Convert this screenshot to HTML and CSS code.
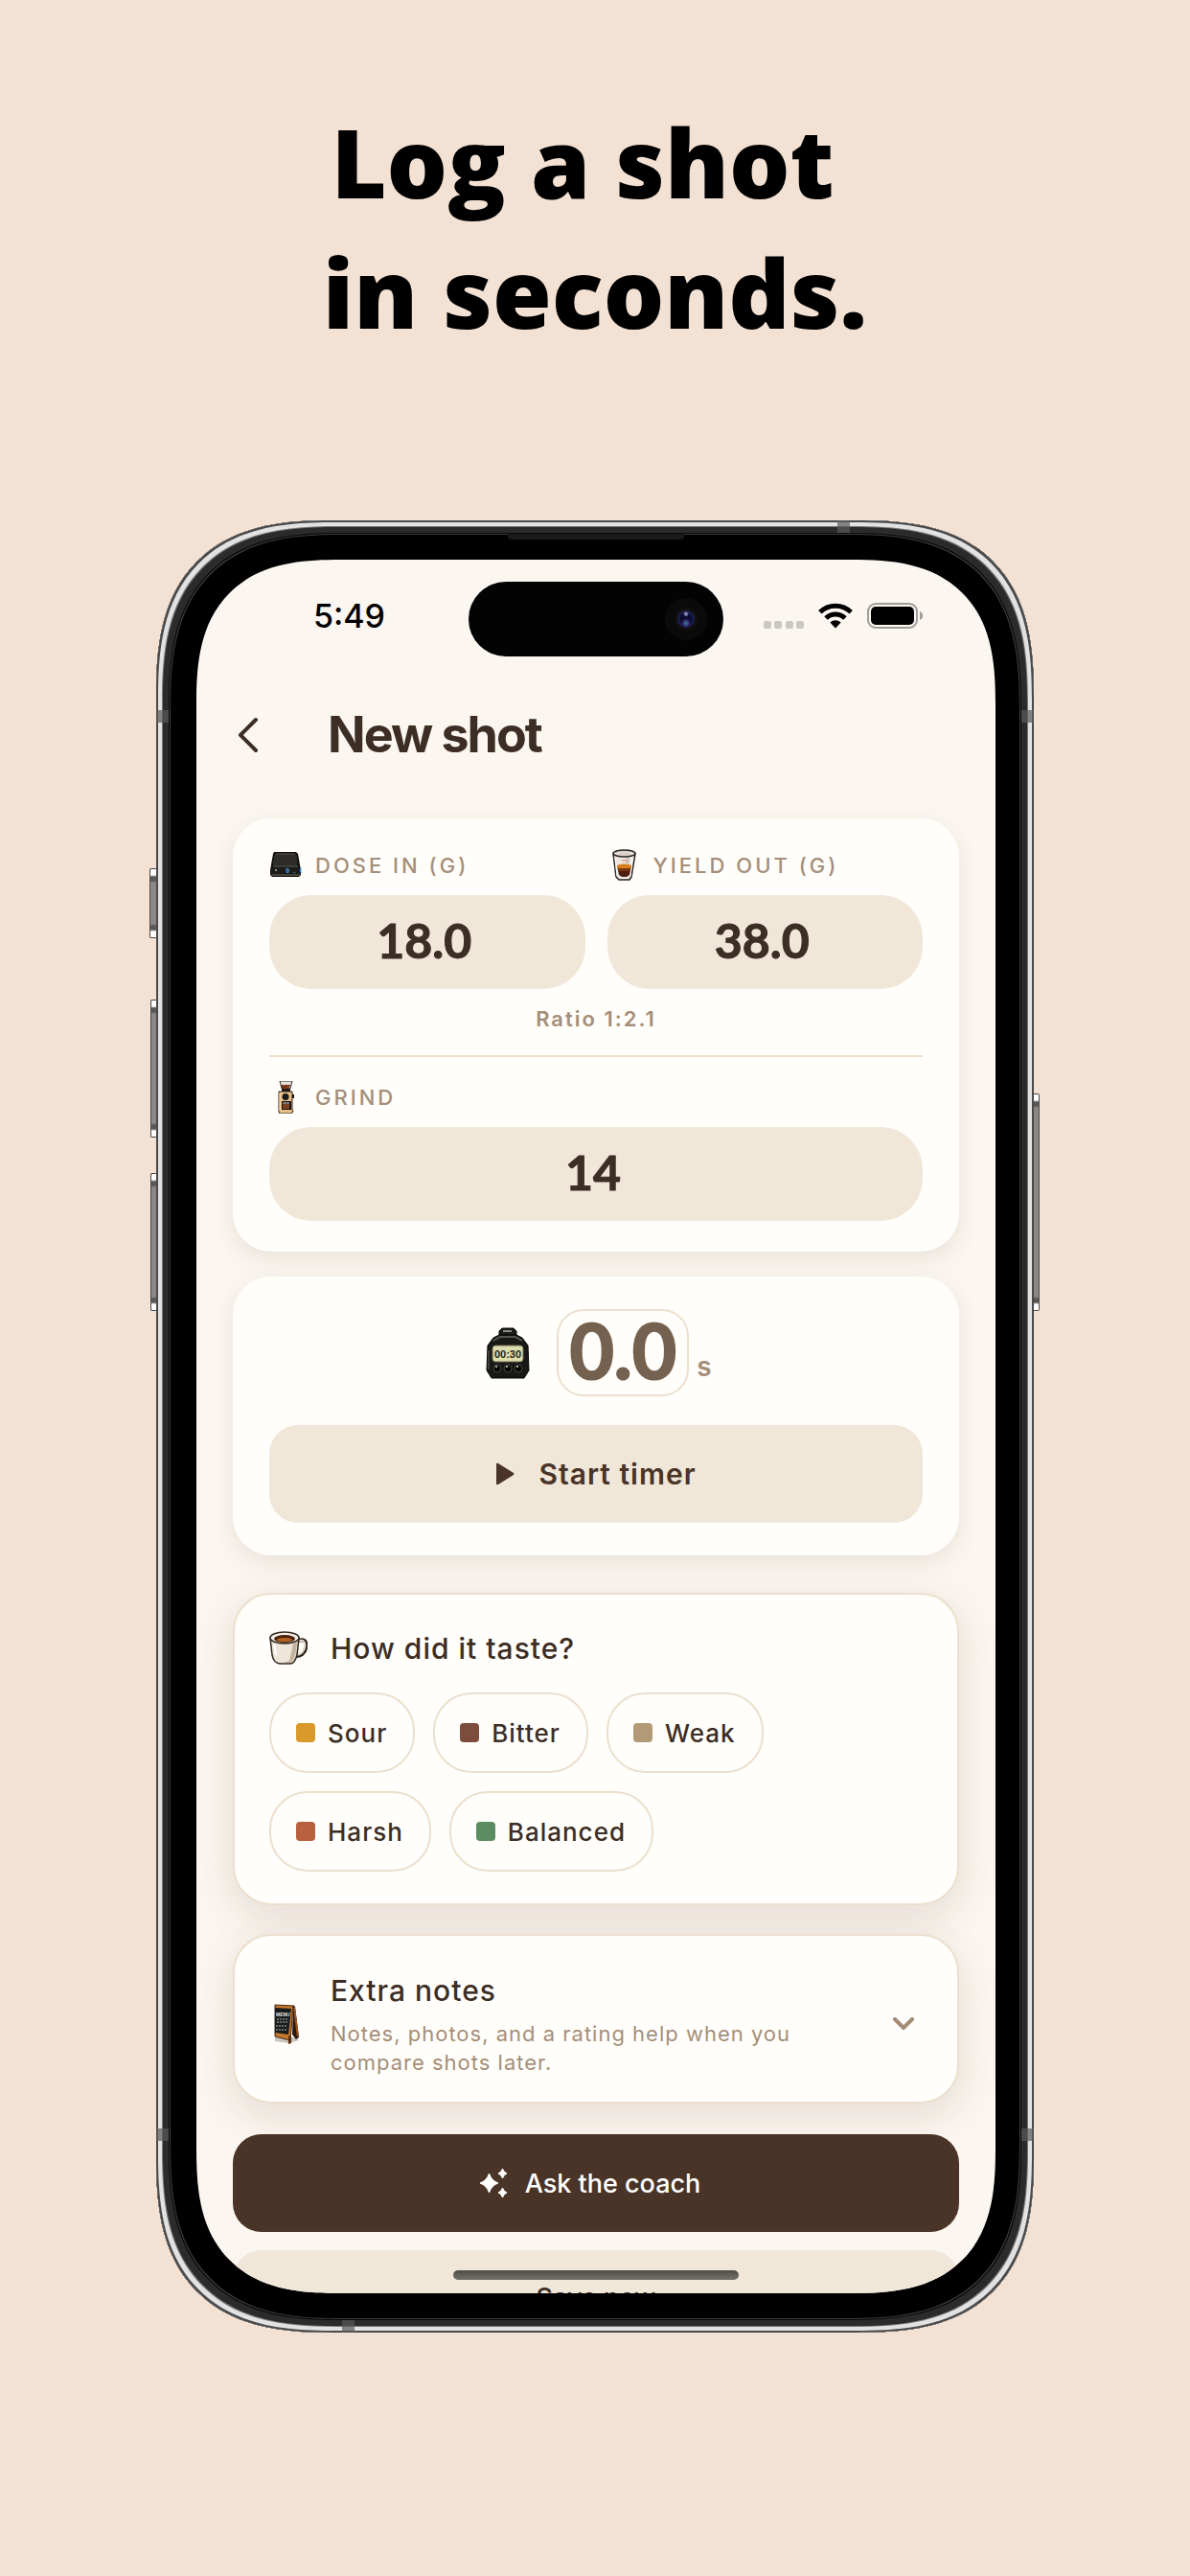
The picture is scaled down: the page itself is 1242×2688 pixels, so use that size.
FILE: index.html
```html
<!DOCTYPE html>
<html lang="en">
<head>
  <meta charset="UTF-8" />
  <meta name="viewport" content="width=device-width, initial-scale=1.0"/>
  <title>New shot</title>
  <link rel="stylesheet" href="styles.css">
</head>
<body>
  <h1 class="headline">Log a shot 
in seconds.</h1>

  <div class="phone">
    <!-- side buttons and antenna bands -->
    <span class="side-button action"></span>
    <span class="side-button volume-up"></span>
    <span class="side-button volume-down"></span>
    <span class="side-button power"></span>
    <span class="band band-left band-high"></span>
    <span class="band band-left band-low"></span>
    <span class="band band-right band-high"></span>
    <span class="band band-right band-low"></span>
    <span class="band band-top"></span>
    <span class="band band-bottom"></span>
    <span class="speaker"></span>

    <div class="screen">
      <div class="status">
        <span class="time">5:49</span>
        <div class="island"><span class="camera"></span></div>
        <div class="status-icons">
          <svg width="42" height="27" viewBox="0 0 42 27">
            <g fill="#cbc7c1">
              <rect x="0" y="19" width="8" height="8" rx="2"/>
              <rect x="11" y="19" width="8" height="8" rx="2"/>
              <rect x="23" y="19" width="8" height="8" rx="2"/>
              <rect x="34" y="19" width="8" height="8" rx="2"/>
            </g>
          </svg>
          <svg width="36" height="27" viewBox="0 0 36 27">
            <g fill="none" stroke="#000" stroke-width="5">
              <path d="M1.8 9.8a23 23 0 0 1 32.4 0"/>
              <path d="M8 16a14.2 14.2 0 0 1 20 0"/>
            </g>
            <path d="M12.3 20.6a8.2 8.2 0 0 1 11.4 0L18 26.4z"/>
          </svg>
          <svg width="59" height="27" viewBox="0 0 59 27">
            <rect x="1" y="1" width="51" height="25" rx="8" fill="none" stroke="#a09c98" stroke-width="2"/>
            <rect x="4" y="4" width="45" height="19" rx="5"/>
            <path d="M55 9c4 1 4 8 0 9z" fill="#a09c98"/>
          </svg>
        </div>
      </div>

      <header class="header">
        <button class="back" aria-label="Back">
          <svg width="22" height="38" viewBox="0 0 22 38"><path d="M19 3L3 19l16 16" fill="none" stroke="#3c2d25" stroke-width="4" stroke-linecap="round" stroke-linejoin="round"/></svg>
        </button>
        <h2>New shot</h2>
      </header>

      <main class="content">
        <section class="card recipe">
          <div class="fields">
            <div class="field">
              <label for="dose">
                <svg width="34" height="34" viewBox="0 0 34 34">
                  <path d="M5 3h23l2 2 3 17v5l-2 2H3l-2-2v-5L4 5z" fill="#15130f"/>
                  <path d="M6 4h21l2 2 1 10-2 2H5l-2-2L5 6z" fill="#2d2c29" stroke="#0a0a09"/>
                  <path d="M7 5h20" stroke="#56534c"/>
                  <path d="M4 18h26" stroke="#6b665a"/>
                  <path d="M3 19h28l1 7H2z" fill="#1c1c1a"/>
                  <path d="M2 27h30" stroke="#77715f"/>
                  <circle cx="7" cy="22" r="1" fill="#b9b5a9"/>
                  <text x="17" y="25" class="scale-text">0.0</text>
                </svg>
                DOSE IN (G)
              </label>
              <input type="text" id="dose" value="18.0">
            </div>
            <div class="field">
              <label for="yield">
                <svg width="34" height="34" viewBox="0 0 34 34">
                  <path d="M6 5l3 24 3 3h11l2-3 4-24z" fill="#ece6e0" stroke="#272421" stroke-width="1.5" stroke-linejoin="round"/>
                  <ellipse cx="17.5" cy="4.5" rx="11.5" ry="3.5" fill="#d9d0c9" stroke="#272421" stroke-width="1.5"/>
                  <path d="M12 3l-2 3M24 3l2 3" stroke="#fff"/>
                  <path d="M8 9l2 19M26 9l-2 19" stroke="#fff"/>
                  <path d="M19 9h4v6h-4z" fill="#cfc5be"/>
                  <path d="M10 17h15l-2 10-3 2h-5l-3-2z" fill="#4b1f0c"/>
                  <path d="M10 17c4-2 11-2 15 0v3H10z" fill="#d68120"/>
                  <path d="M11 20h13l-1 3H12z" fill="#7b3510"/>
                  <path d="M15 12h5" stroke="#dd7d68"/>
                  <path d="M13 30h9" stroke="#fff"/>
                </svg>
                YIELD OUT (G)
              </label>
              <input type="text" id="yield" value="38.0">
            </div>
          </div>
          <p class="ratio">Ratio 1:2.1</p>
          <hr>
          <div class="field">
            <label for="grind">
              <svg width="34" height="34" viewBox="0 0 34 34">
                <path d="M11 0h13l-2 8h-9z" fill="#e4dedb" stroke="#35302d"/>
                <path d="M12 4h10l-2 5h-6z" fill="#6e2e13"/>
                <path d="M14 5h2m2 1h2m-5 2h3" stroke="#b85b2a"/>
                <rect x="13" y="8" width="9" height="3" fill="#1f1b18"/>
                <path d="M10 11h14v19l1 2-2 2H11l-1-2z" fill="#e7bf86" stroke="#2c2118"/>
                <path d="M11 12v19" stroke="#fbe3bb"/>
                <circle cx="17" cy="16.500" r="3.500" fill="#17191b"/>
                <rect x="24" y="14" width="2" height="4" fill="#17191b"/>
                <rect x="13" y="21" width="10" height="9" fill="#1f1510"/>
                <rect x="14" y="24" width="7" height="5" fill="#7d401d"/>
                <path d="M14 23h7" stroke="#d9d2cc"/>
              </svg>
              GRIND
            </label>
            <input type="text" id="grind" value="14">
          </div>
        </section>

        <section class="card timer">
          <div class="clock">
            <svg width="46" height="54" viewBox="0 0 46 54">
              <path d="M14 4l3-3h12l3 3v8H14z" fill="#1b1b19" stroke="#050505"/>
              <path d="M18 4h9" stroke="#8a8981" stroke-width="2"/>
              <path d="M8 11l6-3h18l6 3 6 8 1 26-5 8H6l-5-8 1-26z" fill="#181917" stroke="#050505"/>
              <path d="M8 14l7-4h16l7 4" fill="none" stroke="#55544f" stroke-width="2"/>
              <path d="M3 24v20" stroke="#3c3c39" stroke-width="2"/>
              <rect x="7" y="19" width="32" height="17" rx="3" fill="#dddcac" stroke="#6b6951"/>
              <text x="23" y="32" class="clock-text">00:30</text>
              <g fill="#050505" stroke="#45443f">
                <circle cx="12" cy="43" r="4"/><circle cx="23" cy="43" r="4"/><circle cx="34" cy="43" r="4"/>
              </g>
              <path d="M10 41h2m9 0h2m9 0h2" stroke="#aaa99d" stroke-width="2"/>
            </svg>
            <input type="text" id="seconds" value="0.0">
            <label for="seconds">s</label>
          </div>
          <button class="start">
            <svg width="20" height="24" viewBox="0 0 20 24"><path d="M1 2v20q0 2 2 1L19 13q1-1 0-2L3 1Q1 0 1 2z" fill="#4a3428"/></svg>
            Start timer
          </button>
        </section>

        <section class="card outlined taste">
          <h3>
            <svg width="40" height="36" viewBox="0 0 40 36">
              <path d="M29 11c6-4 11-1 9 7-1 5-5 8-10 8" fill="none" stroke="#302721" stroke-width="4"/>
              <path d="M30 11c5-3 8 0 7 6-1 5-4 7-8 8" fill="none" stroke="#e9ded1" stroke-width="2"/>
              <path d="M1 7l2 18c1 5 4 9 8 9h11c4 0 6-5 7-9l2-18z" fill="#efe6da" stroke="#302721" stroke-width="1.5"/>
              <path d="M25 13l-4 18-6 2h7c3-1 5-6 6-12l1-9z" fill="#c5b49f"/>
              <path d="M5 13l2 12" stroke="#fff" stroke-width="2"/>
              <ellipse cx="16" cy="7" rx="15" ry="6" fill="#f7efe4" stroke="#302721" stroke-width="1.5"/>
              <ellipse cx="16" cy="8" rx="11" ry="4" fill="#4b210c"/>
              <ellipse cx="16" cy="9" rx="8" ry="2" fill="#b46321"/>
            </svg>
            How did it taste?
          </h3>
          <div class="chips">
            <button class="chip"><span class="swatch sour"></span>Sour</button>
            <button class="chip"><span class="swatch bitter"></span>Bitter</button>
            <button class="chip"><span class="swatch weak"></span>Weak</button>
            <button class="chip"><span class="swatch harsh"></span>Harsh</button>
            <button class="chip"><span class="swatch balanced"></span>Balanced</button>
          </div>
        </section>

        <button class="card outlined notes">
          <svg width="40" height="42" viewBox="0 0 40 42">
            <path d="M6 35h20l5 3-10 3-15-2z" fill="#c9c3bb"/>
            <path d="M25 1l2 2 4 32-3 2-4-5z" fill="#2b1810"/>
            <path d="M26 4l4 30" stroke="#9b551f" stroke-width="2"/>
            <path d="M6 1l19 1-3 36-16-4z" fill="#c8792c" stroke="#412312"/>
            <path d="M6 4l17 1-3 27-14-2z" fill="#191c1d"/>
            <path d="M20 33l3 1v7l-3 1z" fill="#5b2d13"/>
            <text x="7" y="13" class="menu-text">MENU</text>
            <path d="M8 16h12M8 19h11M7 23h12M7 27h11" stroke="#b9bab5" stroke-dasharray="2 1"/>
          </svg>
          <span class="notes-text">
            <span class="notes-title">Extra notes</span>
            <span class="notes-desc">Notes, photos, and a rating help when you compare shots later.</span>
          </span>
          <svg width="24" height="14" viewBox="0 0 24 14"><path d="M3 2l9 9 9-9" fill="none" stroke="#a28c77" stroke-width="4" stroke-linecap="round" stroke-linejoin="round"/></svg>
        </button>

        <div class="actions">
          <button class="coach">
            <svg width="28" height="30" viewBox="0 0 28 30">
              <path fill="#fff" d="M9.5 5q2.500 7.500 9.500 10q-7 2.500-9.500 10q-2.500-7.500-9.500-10q7-2.500 9.500-10zM23.500 0q1.200 3.800 4.500 5q-3.300 1.200-4.500 5q-1.200-3.800-4.500-5q3.300-1.200 4.500-5zM23.500 20q1.200 3.800 4.500 5q-3.300 1.200-4.500 5q-1.200-3.800-4.500-5q3.300-1.200 4.500-5z" stroke="#fff" stroke-linejoin="round"/>
            </svg>
            Ask the coach
          </button>
          <button class="save">Save now</button>
        </div>
      </main>
      <span class="home-bar"></span>
    </div>
  </div>
</body>
</html>
```
FILE: styles.css
```css
* {
  box-sizing: border-box;
}

body {
  margin: 0;
  padding: 100px 0;
  background-color: #f3e1d3;
  color: #3c2d25;
  font-family: Inter, "Liberation Sans", sans-serif;
}

h1, h2, h3, p {
  margin: 0;
}

button, input {
  font-family: inherit;
  color: inherit;
  border: none;
}

button {
  cursor: pointer;
  padding: 0;
}

svg {
  display: block;
  flex: none;
}

.headline {
  color: #000;
  font-family: "Open Sans", sans-serif;
  font-size: 100px;
  font-weight: 800;
  line-height: 136px;
  text-align: center;
  white-space: break-spaces;
}

/* Phone */
.phone {
  position: relative;
  display: flex;
  margin: 171px 163px 0;
  aspect-ratio: 916 / 1891;
  padding: 41px 40px 41px 42px;
  border-radius: 144px;
  background-color: #000;
  box-shadow:
    inset 0 0 0 2px #4b4a4a,
    inset 0 0 0 6px #e2e2e2,
    inset 0 0 0 7px #777,
    inset 0 0 0 13px #2c2b2a,
    inset 0 0 0 14px #080808,
    inset 0 0 0 15px #3c3c3c;
}

.screen {
  position: relative;
  flex: 1;
  min-width: 0;
  overflow: hidden;
  border-radius: 118px;
  background-color: #fbf6f0;
}

@supports (corner-shape: superellipse(1.4)) {
  .phone {
    border-radius: 185px;
    corner-shape: superellipse(1.4);
  }

  .screen {
    border-radius: 150px;
    corner-shape: superellipse(1.4);
  }
}

.side-button {
  position: absolute;
  left: -6px;
  width: 6px;
  height: 144px;
  border: 1px solid #4b4a4a;
  border-right: none;
  border-radius: 2px 0 0 2px;
  background: linear-gradient(#fff 0 6px, #5a5757 8px 12px, #8d8888 14px, #8d8888 calc(100% - 14px), #5a5757 calc(100% - 12px) calc(100% - 8px), #fff calc(100% - 6px));
}

.action {
  left: -7px;
  width: 7px;
  top: 363px;
  height: 73px;
}

.volume-up {
  top: 500px;
}

.volume-down {
  top: 681px;
}

.power {
  left: auto;
  right: -6px;
  top: 598px;
  height: 227px;
  border: 1px solid #4b4a4a;
  border-left: none;
  border-radius: 0 2px 2px 0;
}

.band {
  position: absolute;
  width: 13px;
  height: 13px;
  background-color: rgba(90, 90, 90, 0.7);
}

.band-left {
  left: 0;
}

.band-right {
  right: 0;
}

.band-high {
  top: 198px;
}

.band-low {
  bottom: 200px;
}

.band-top {
  top: 0;
  right: 192px;
}

.band-bottom {
  bottom: 0;
  left: 194px;
}

.speaker {
  position: absolute;
  top: 14px;
  left: 50%;
  width: 184px;
  height: 6px;
  margin-left: -91px;
  border-radius: 0 0 4px 4px;
  background-color: #1b1b1b;
}

/* Status bar */
.status {
  display: grid;
  grid-template-columns: 1fr 266px 1fr;
  align-items: center;
  padding-top: 23px;
  color: #000;
}

.time {
  padding: 0 87px 6px 0;
  font-size: 34px;
  font-weight: 500;
  line-height: 40px;
  text-align: right;
}

.island {
  display: flex;
  align-items: center;
  justify-content: flex-end;
  height: 78px;
  padding-right: 17px;
  border-radius: 39px;
  background-color: #030303;
}

.camera {
  width: 44px;
  height: 44px;
  border-radius: 50%;
  background: radial-gradient(circle at 50% 38%, #8f8bc0 0 1px, transparent 3px), radial-gradient(circle at 50% 60%, #336a90 0 1px, #2c1558 4px, transparent 5px), radial-gradient(circle, #0b0b30 0 6px, #1c2460 8px, #111 9px 11px, #0a0a0a 12px);
}

.status-icons {
  display: flex;
  gap: 15px;
  padding: 0 0 8px 42px;
}

/* Header */
.header {
  display: flex;
  align-items: center;
  gap: 72px;
  padding: 50px 43px 55px;
}

.back {
  background: none;
}

.header h2 {
  font-size: 52px;
  font-weight: 700;
  line-height: 64px;
  letter-spacing: -2px;
}

/* Cards */
.content {
  display: flex;
  flex-direction: column;
  padding: 0 38px;
}

.card {
  border-radius: 40px;
  padding: 32px 38px;
  background-color: #fffefa;
  box-shadow: 0 8px 24px rgba(90, 55, 35, 0.1);
}

.outlined {
  border: 2px solid #ecdfce;
  padding: 36px;
  box-shadow: 0 12px 44px rgba(90, 55, 35, 0.14);
}

.fields {
  display: grid;
  grid-template-columns: 1fr 1fr;
  gap: 23px;
}

.field label {
  display: flex;
  align-items: center;
  gap: 14px;
  margin-bottom: 14px;
  color: #a58e79;
  font-size: 22px;
  font-weight: 500;
  line-height: 34px;
  letter-spacing: 3px;
}

.field input {
  display: block;
  width: 100%;
  height: 98px;
  padding: 0 6px 4px 0;
  border-radius: 44px;
  background-color: #f0e7d9;
  font-family: Lato, sans-serif;
  font-size: 50px;
  font-weight: 700;
  text-align: center;
  -webkit-text-stroke: 1px #3c2d25;
}

.ratio {
  margin: 16px 0 23px;
  color: #a58e79;
  font-size: 22px;
  font-weight: 600;
  line-height: 30px;
  letter-spacing: 2px;
  text-align: center;
}

hr {
  height: 2px;
  margin: 0 0 25px;
  border: none;
  background-color: #efe0ce;
}

.timer {
  margin: 26px 0 39px;
  padding: 34px 38px;
}

.clock {
  display: flex;
  align-items: center;
  justify-content: center;
  margin-bottom: 30px;
  padding-left: 6px;
}

.clock input {
  width: 138px;
  height: 91px;
  margin: 0 8px 0 28px;
  padding: 0 0 8px;
  border: 2px solid #eedfce;
  border-radius: 28px;
  background: none;
  color: #75614f;
  font-family: Lato, sans-serif;
  font-size: 80px;
  font-weight: 700;
  text-align: center;
  -webkit-text-stroke: 2px #75614f;
}

.clock label {
  padding-top: 28px;
  color: #a58e79;
  font-size: 28px;
  font-weight: 600;
  line-height: 34px;
}

.start, .coach, .save {
  display: flex;
  align-items: center;
  justify-content: center;
  width: 100%;
  height: 102px;
  border-radius: 30px;
  background-color: #f0e7d9;
  color: #4a3428;
}

.start {
  gap: 25px;
  font-size: 30px;
  font-weight: 600;
  letter-spacing: 1px;
}

.taste {
  padding-bottom: 33px;
}

.taste h3 {
  display: flex;
  align-items: center;
  gap: 24px;
  margin-bottom: 26px;
  font-size: 30px;
  font-weight: 500;
  line-height: 40px;
  letter-spacing: 1px;
}

.chips {
  display: flex;
  flex-wrap: wrap;
  gap: 19px;
}

.chip {
  display: flex;
  align-items: center;
  gap: 13px;
  height: 84px;
  padding: 0 27px 0 26px;
  border: 2px solid #ecdfce;
  border-radius: 40px;
  background: none;
  font-size: 26px;
  font-weight: 500;
  letter-spacing: 1px;
}

.swatch {
  width: 20px;
  height: 20px;
  border-radius: 4px;
}

.sour {
  background-color: #d99a2b;
}

.bitter {
  background-color: #7c4d3a;
}

.weak {
  background-color: #b29a76;
}

.harsh {
  background-color: #b9603f;
}

.balanced {
  background-color: #5d8c63;
}

.notes {
  display: flex;
  align-items: center;
  gap: 24px;
  margin: 30px 0 32px;
  padding: 37px 44px 26px 36px;
  text-align: left;
}

.notes-text {
  flex: 1;
}

.notes-title {
  display: block;
  margin-bottom: 10px;
  font-size: 30px;
  font-weight: 500;
  line-height: 40px;
  letter-spacing: 1px;
}

.notes-desc {
  display: block;
  max-width: 520px;
  color: #a58e79;
  font-size: 22px;
  line-height: 30px;
  letter-spacing: 1px;
}

.actions {
  display: flex;
  flex-direction: column;
  gap: 19px;
}

.coach, .save {
  gap: 19px;
  font-size: 27px;
  font-weight: 500;
}

.coach {
  padding-right: 12px;
  background-color: #4a3428;
  color: #fff;
}

.save {
  padding-bottom: 4px;
  color: #3c2d25;
}

.home-bar {
  position: absolute;
  bottom: 14px;
  left: 50%;
  width: 298px;
  height: 10px;
  margin-left: -149px;
  border-radius: 5px;
  background: linear-gradient(#4d4c44, #77716a);
}

.scale-text {
  fill: #4c9fe0;
  font: 700 7px "Liberation Mono", monospace;
}

.clock-text {
  fill: #24251a;
  font: 700 11px "Liberation Sans", sans-serif;
  text-anchor: middle;
}

.menu-text {
  fill: #e8e6e0;
  font: 700 5px "Liberation Sans", sans-serif;
}
```
